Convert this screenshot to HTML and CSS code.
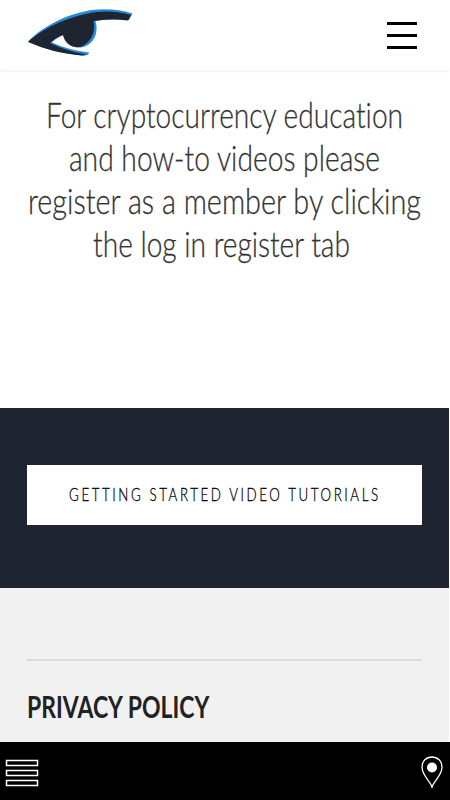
FILE: index.html
```html
<!DOCTYPE html>
<html lang="en">
  <head>
    <title>Getting started</title>
    <meta charset="utf-8" />
    <meta name="viewport" content="width=device-width, initial-scale=1.0" />
    <link rel="stylesheet" href="styles.css">
  </head>
  <body>
    <div class="page">
      <header class="header">
        <a class="logo" href="#">
          <svg width="108" height="50" viewBox="0 0 108 50">
            <path class="logo_glow" d="M1 33.500C18 16 45 4.500 67 1.800Q88 0 105.500 5.500L102 12Q84 10 68.500 13C72 25 67 37 54 39.500C44 40 38 35 36 27Q29 30 25 34.500Q41 42 62 44.500Q62 48 56 47.500Q26 45 1 33.500Z" />
            <path class="logo_shape" d="M1 34C18 18.500 45 7.500 69 4Q88 2 104 7L101 12.500Q84 10.500 66.500 13C69 25 63 36 53 39C44 40 38 35 36 27Q28 30 23 35Q39 43 59 46.500Q56 48 50 47Q25 44.500 1 34Z" />
          </svg>
        </a>
        <button class="menu_button">
          <span></span>
          <span></span>
          <span></span>
        </button>
      </header>
      <main>
        <section class="intro">
          <h2 class="intro_text">
            <span class="line line_1">For cryptocurrency education</span>
            <span class="line line_2">and how-to videos please</span>
            <span class="line line_3">register as a member by clicking</span>
            <span class="line line_4">the log in register tab</span>
          </h2>
        </section>
        <section class="tutorials">
          <a class="tutorials_button" href="#"><span>GETTING STARTED VIDEO TUTORIALS</span></a>
        </section>
        <footer class="footer">
          <h3 class="footer_title"><span>PRIVACY POLICY</span></h3>
        </footer>
      </main>
    </div>
    <nav class="bottom_bar">
      <svg width="34" height="28" viewBox="0 0 34 28">
        <path class="outline" d="M1.500 1.500h31v5h-31zM1.500 11.500h31v5h-31zM1.500 21.500h31v5h-31z" />
      </svg>
      <svg width="22" height="33" viewBox="0 0 22 33">
        <path class="outline_pin" d="M11 31C9 25 1 19 1 11.200C1 5 5.300 1 11 1S21 5 21 11.200C21 19 13 25 11 31Z" />
        <circle class="pin_dot" cx="11" cy="11.500" r="5" />
      </svg>
    </nav>
  </body>
</html>
```
FILE: styles.css
```css
body {
  margin: 0;
  height: 100vh;
  overflow: hidden;
  display: flex;
  flex-direction: column;
  background-color: #fff;
  font-family: Lato, sans-serif;
  font-variant-ligatures: none;
}

.page {
  flex: 1;
  min-height: 0;
  overflow: hidden;
  margin-right: 1px;
}

.header {
  display: flex;
  justify-content: space-between;
  height: 70px;
  padding: 0 32px 0 27px;
  box-sizing: border-box;
  box-shadow: 0 1px 3px rgba(0, 0, 0, 0.08);
}
.logo {
  margin-top: 8px;
}
.logo svg {
  display: block;
}
.logo_glow {
  fill: #2589d8;
}
.logo_shape {
  fill: #1e2430;
}

.menu_button {
  display: flex;
  flex-direction: column;
  gap: 9px;
  width: 30px;
  margin: 22px 0 0;
  padding: 0;
  border: 0;
  background: none;
}
.menu_button span {
  height: 3px;
  background-color: #000;
}

.intro {
  height: 338px;
  padding-top: 23px;
  box-sizing: border-box;
}
.intro_text {
  margin: 0;
  font-size: 35px;
  font-weight: 300;
  line-height: 43px;
  color: #333;
  -webkit-text-stroke: 0.3px #333;
}
.line {
  display: flex;
  justify-content: center;
  white-space: nowrap;
}
.line_1 {
  transform: scaleX(0.804);
}
.line_2 {
  transform: scaleX(0.807);
}
.line_3 {
  transform: scaleX(0.823);
}
.line_4 {
  transform: translateX(-3px) scaleX(0.803);
}

.tutorials {
  height: 180px;
  padding: 57px 27px 0;
  box-sizing: border-box;
  background-color: #1e2430;
}
.tutorials_button {
  display: flex;
  align-items: center;
  justify-content: center;
  height: 60px;
  padding-bottom: 2px;
  box-sizing: border-box;
  background-color: #fff;
  color: #000;
  font-size: 18px;
  font-weight: 300;
  letter-spacing: 3.5px;
  text-decoration: none;
  white-space: nowrap;
  -webkit-text-stroke: 0.3px #000;
}
.tutorials_button span {
  transform: scaleX(0.739);
}

.footer {
  height: 200px;
  padding: 71px 27px 0;
  background-color: #f1f1f1;
}
.footer_title {
  margin: 0;
  padding-top: 27px;
  border-top: 2px solid #dcdcdc;
  font-size: 30px;
  font-weight: 700;
  line-height: 36px;
  color: #222;
}
.footer_title span {
  display: inline-block;
  transform: scaleX(0.766);
  transform-origin: left;
}

.bottom_bar {
  display: flex;
  justify-content: space-between;
  align-items: flex-start;
  height: 58px;
  padding: 14px 7px 0 5px;
  box-sizing: border-box;
  background-color: #000;
}
.bottom_bar svg:first-child {
  margin-top: 3px;
}
.outline {
  fill: none;
  stroke: #fff;
  stroke-width: 1.5;
}
.outline_pin {
  fill: none;
  stroke: #fff;
  stroke-width: 1.3;
}
.pin_dot {
  fill: #fff;
}
```
